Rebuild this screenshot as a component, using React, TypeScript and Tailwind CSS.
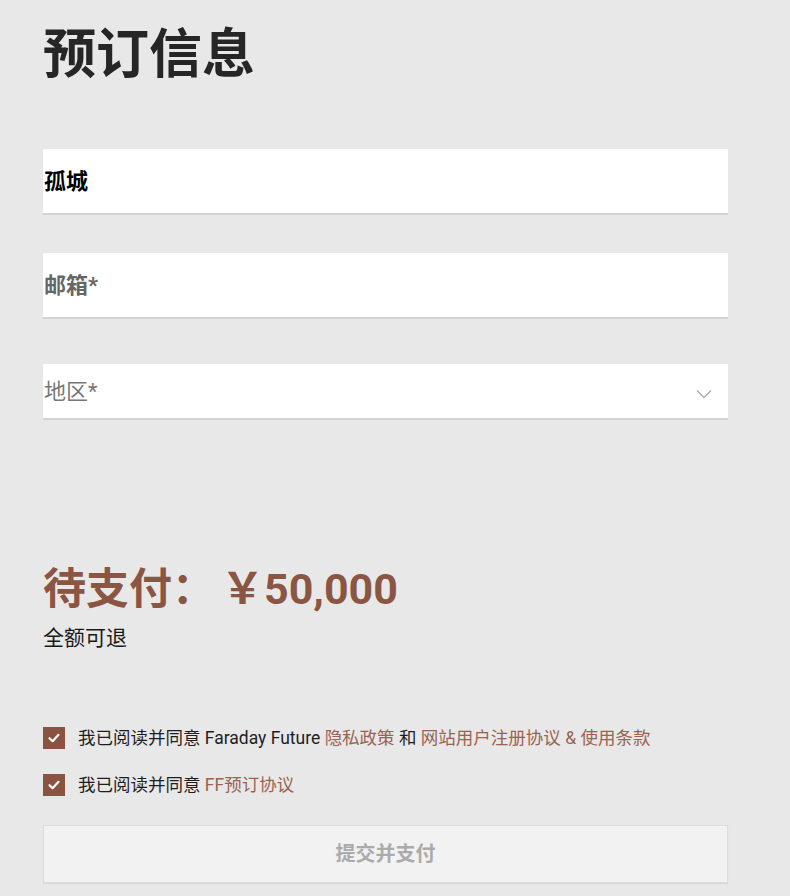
import React from "react";

const font = { fontFamily: 'Roboto, "Noto Sans CJK SC", "Noto Sans", sans-serif' };

function CheckBox() {
  return (
    <div className="w-[22px] h-[22px] bg-[#8a5241] flex items-center justify-center shrink-0">
      <svg width="14" height="14" viewBox="0 0 14 14" fill="none">
        <path d="M2.5 7.2 L5.6 10.2 L11.5 3.8" stroke="white" strokeWidth="2.2" strokeLinecap="round" strokeLinejoin="round" />
      </svg>
    </div>
  );
}

export default function App() {
  return (
    <div className="min-h-[896px] bg-[#e8e8e8] pl-[43px]" style={font}>
      <div className="w-[685px] pt-[24px]">
        <h1 className="h-[62px] leading-[62px] text-[53px] font-bold text-[#262626]">预订信息</h1>

        <div className="mt-[63px] h-[66px] bg-white border-b-2 border-[#d4d4d4] flex items-center">
          <span className="text-[22px] font-bold text-black pl-[1px]">孤城</span>
        </div>

        <div className="mt-[38px] h-[66px] bg-white border-b-2 border-[#d4d4d4] flex items-center">
          <span className="text-[22px] font-bold text-[#666666] pl-[1px]">邮箱*</span>
        </div>

        <div className="mt-[45px] h-[56px] bg-white border-b-2 border-[#d4d4d4] flex items-center justify-between">
          <span className="text-[22px] text-[#777777] pl-[1px]">地区*</span>
          <svg width="16" height="10" viewBox="0 0 16 10" fill="none" className="mr-[16px] mt-[6px]">
            <path d="M1 1.5 L8 8.5 L15 1.5" stroke="#aaaaaa" strokeWidth="1.3" />
          </svg>
        </div>

        <div className="mt-[144px] h-[50px] leading-[50px] text-[43px] font-bold text-[#8b5543] whitespace-nowrap">
          待支付：<span className="ml-[6px]">￥50,000</span>
        </div>
        <div className="mt-[9px] h-[30px] leading-[30px] text-[21px] text-[#1a1a1a]">全额可退</div>

        <div className="mt-[73px] flex items-center gap-[13px] h-[24px] text-[17.5px] text-[#1e1e1e] whitespace-nowrap">
          <CheckBox />
          <span>
            我已阅读并同意 Faraday Future <span className="text-[#9a6250]">隐私政策</span> 和{" "}
            <span className="text-[#9a6250]">网站用户注册协议 &amp; 使用条款</span>
          </span>
        </div>
        <div className="mt-[23px] flex items-center gap-[13px] h-[24px] text-[17.5px] text-[#1e1e1e] whitespace-nowrap">
          <CheckBox />
          <span>
            我已阅读并同意 <span className="text-[#9a6250]">FF预订协议</span>
          </span>
        </div>

        <button className="mt-[28px] w-full h-[58px] bg-[#f2f2f2] border border-[#dcdcdc] shadow-[0_1px_1px_rgba(0,0,0,0.06)] text-[20px] font-bold text-[#ababab]">
          提交并支付
        </button>
      </div>
    </div>
  );
}
